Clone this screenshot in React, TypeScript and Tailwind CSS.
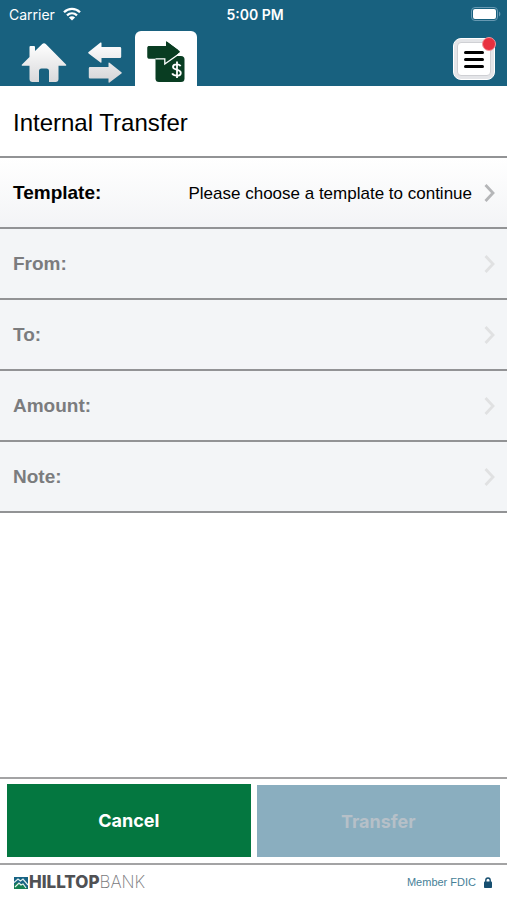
import React from "react";

const sans = "font-['Liberation_Sans',Arial,sans-serif]";
const inter = "font-['Inter',sans-serif]";

function WifiIcon() {
  return (
    <svg width="18" height="14" viewBox="0 0 18 14" aria-hidden="true">
      <g fill="none" stroke="#fff" strokeWidth="2.3">
        <path d="M1 5.2C5.6.7 12.4.7 17 5.2" />
        <path d="M4 8.3c2.9-2.7 7.1-2.7 10 0" />
      </g>
      <path d="M9 13.6 5.9 10.4c1.8-1.5 4.4-1.5 6.2 0z" fill="#fff" />
    </svg>
  );
}

function BatteryIcon() {
  return (
    <svg width="30" height="14" viewBox="0 0 30 14" aria-hidden="true">
      <rect x=".5" y=".5" width="26" height="13" rx="3.5" fill="none" stroke="#6799b2" />
      <rect x="2" y="2" width="23" height="10" rx="2" fill="#fff" />
      <path d="M28 4.5c1.800.8 1.800 4.200 0 5z" fill="#6799b2" />
    </svg>
  );
}

function StatusBar() {
  return (
    <div className={`grid h-7 grid-cols-3 items-center pl-[9px] pr-1.5 text-[14px] text-white ${inter}`}>
      <div className="flex items-center gap-2">
        <span>Carrier</span>
        <WifiIcon />
      </div>
      <span className="text-center font-semibold">5:00 PM</span>
      <div className="flex justify-end">
        <BatteryIcon />
      </div>
    </div>
  );
}

function HomeIcon() {
  return (
    <svg width="46" height="40" viewBox="0 0 46 40" aria-hidden="true">
      <defs>
        <linearGradient id="home" x1="0" y1="0" x2="0" y2="1">
          <stop offset="0" stopColor="#fff" />
          <stop offset="1" stopColor="#d9d9db" />
        </linearGradient>
      </defs>
      <path
        d="M1 21.500 8.500 14V4q0-1 1-1h3.500q1 0 1 1v4L21 1.200q2-1.900 4 0L45 21.500q.8 1.200-.8 1.200H37.500V36q0 3-3 3H28V28q0-2.500-2.500-2.500h-5Q18 25.500 18 28v11h-6.500q-3 0-3-3V22.700H2Q0 22.700 1 21.500z"
        fill="url(#home)"
      />
    </svg>
  );
}

function TransferArrowsIcon() {
  return (
    <svg width="34" height="42" viewBox="0 0 34 42" aria-hidden="true">
      <defs>
        <linearGradient id="arrows" x1="0" y1="0" x2="0" y2="42" gradientUnits="userSpaceOnUse">
          <stop offset="0" stopColor="#fff" />
          <stop offset="1" stopColor="#d2d2d5" />
        </linearGradient>
      </defs>
      <g fill="url(#arrows)">
        <path d="M.6 10 12.500.6q1-.6 1 .6V5H32q1.200 0 1.200 1.200v8.600q0 1.200-1.200 1.200H13.500v4q0 1.200-1 .6L.6 11.400q-.8-.7 0-1.400z" />
        <path d="M33.400 30.200 21.500 20.800q-1-.6-1 .6V25H2q-1.200 0-1.200 1.200v9Q.8 36.400 2 36.400h18.500V40q0 1.200 1 .6l11.900-9q.8-.7 0-1.400z" />
      </g>
    </svg>
  );
}

function PaymentIcon() {
  return (
    <svg width="38" height="42" viewBox="0 0 38 42" aria-hidden="true">
      <path
        d="M8.500 15H34q3.500 0 3.500 3.500v19Q37.500 41 34 41H12q-3.500 0-3.500-3.500z"
        fill="#093d22"
      />
      <path
        d="M2 5h17V1.200q0-1.200 1-.5l12.500 9.200q.9.800 0 1.600L20 22.800q-1.600 1-1.600-.6V17.500H2q-1.500 0-1.500-1.500V6.500Q.5 5 2 5z"
        fill="#093d22"
      />
      <path d="M30 9 38 9V16L34 13.500 31 13.500z" fill="#fff" />
      <path
        d="M2 5h17V1.200q0-1.200 1-.5l12.500 9.200q.9.800 0 1.600L20 21.200V17.500H2q-1.500 0-1.500-1.500V6.500Q.5 5 2 5z"
        fill="#093d22"
      />
      <path d="M8.500 17.800h9.300V23L33 12.200" fill="none" stroke="#fff" strokeWidth="1.300" />
      <path
        d="M33.500 25.300c-.6-2.200-7.300-3-7.500.6-.2 3.500 7.800 2 7.800 6 0 3.700-7.400 3.400-8.600.5M30 20.500V37"
        fill="none"
        stroke="#fff"
        strokeWidth="1.800"
      />
    </svg>
  );
}

function NavBar() {
  return (
    <nav className="flex h-[58px] items-end">
      <button type="button" aria-label="Home" className="ml-[21px] mb-[3px]">
        <HomeIcon />
      </button>
      <button type="button" aria-label="Transfers" className="ml-[21px] mb-0.5">
        <TransferArrowsIcon />
      </button>
      <button
        type="button"
        aria-label="Internal transfer"
        aria-current="page"
        className="ml-[13px] flex h-[55px] w-[62px] justify-center rounded-t-md bg-white pt-2.5"
      >
        <PaymentIcon />
      </button>
      <button
        type="button"
        aria-label="Menu"
        className="relative mb-1.5 ml-auto mr-3 flex size-[42px] items-center justify-center rounded-lg border border-white bg-[#e4e5e8]"
      >
        <span className="flex size-[34px] flex-col items-center justify-center gap-1 rounded border border-[#cfd0d4] bg-white">
          <span className="h-[3px] w-5 rounded-full bg-black" />
          <span className="h-[3px] w-5 rounded-full bg-black" />
          <span className="h-[3px] w-5 rounded-full bg-black" />
        </span>
        <span className="absolute -right-0.5 -top-0.5 size-3.5 rounded-full border border-[#f2959d] bg-[#e8303f]" />
      </button>
    </nav>
  );
}

function Row({ label, value, active = false }: { label: string; value?: string; active?: boolean }) {
  return (
    <button
      type="button"
      disabled={!active}
      className={`flex h-[71px] w-full items-center border-b-2 border-[#929395] pl-[13px] pr-3 pt-0.5 text-left ${
        active ? "bg-linear-to-b from-white to-[#f3f4f6] text-black" : "bg-[#f3f5f7] text-[#7b7c7e]"
      }`}
    >
      <span className="text-[19px] font-bold">{label}</span>
      <span className="ml-auto text-[17px]">{value}</span>
      <svg
        width="11"
        height="18"
        viewBox="0 0 11 18"
        className={`mb-0.5 ml-3 ${active ? "text-[#b5b6b8]" : "text-[#e0e1e2]"}`}
        aria-hidden="true"
      >
        <path d="m1.500 1 7.500 8-7.500 8" fill="none" stroke="currentColor" strokeWidth="2.800" />
      </svg>
    </button>
  );
}

function BankLogo() {
  return (
    <div className={`flex items-center gap-px text-[17px] leading-none ${inter}`}>
      <svg width="14" height="12" viewBox="0 0 14 12" aria-hidden="true">
        <rect width="14" height="12" fill="#176384" />
        <path d="M0 12V8l3-3 3 3 2-2 6 6z" fill="#168052" />
        <path d="m0 5.500 4-3.500 2.500 2L9 2l5 6M1 10l4-4 2 2 2-1 3 4" fill="none" stroke="#e5f0ed" strokeWidth="1.200" />
      </svg>
      <span>
        <span className="font-extrabold text-[#505154]">HILLTOP</span>
        <span className="font-extralight text-[#77787b]">BANK</span>
      </span>
    </div>
  );
}

function LockIcon() {
  return (
    <svg width="8" height="11" viewBox="0 0 8 11" aria-hidden="true">
      <path d="M1.800 5V3.200a2.200 2.200 0 0 1 4.400 0V5" fill="none" stroke="#174f70" strokeWidth="1.400" />
      <rect y="4.500" width="8" height="6.500" rx=".8" fill="#174f70" />
    </svg>
  );
}

export default function App() {
  return (
    <div className={`flex min-h-screen flex-col bg-white text-black ${sans}`}>
      <header className="bg-[#18617f]">
        <StatusBar />
        <NavBar />
      </header>
      <main className="flex flex-1 flex-col">
        <h1 className="flex h-[72px] items-center border-b-2 border-[#929395] px-[13px] pt-1 text-[24px]">
          Internal Transfer
        </h1>
        <Row label="Template:" value="Please choose a template to continue" active />
        <Row label="From:" />
        <Row label="To:" />
        <Row label="Amount:" />
        <Row label="Note:" />
      </main>
      <div
        className={`grid grid-cols-2 gap-1.5 border-y-2 border-[#a3a3a4] px-[7px] pb-1.5 pt-[5px] text-[18px] font-bold ${inter}`}
      >
        <button type="button" className="h-[73px] bg-[#047740] text-white">
          Cancel
        </button>
        <button type="button" disabled className="h-[73px] border-t border-white bg-[#8aaebf] text-[#b6c0c8]">
          Transfer
        </button>
      </div>
      <footer className="flex h-[35px] items-center justify-between pl-3.5 pr-[15px]">
        <BankLogo />
        <div className="flex items-center gap-2 text-[11px] text-[#477f98]">
          <span>Member FDIC</span>
          <LockIcon />
        </div>
      </footer>
    </div>
  );
}
